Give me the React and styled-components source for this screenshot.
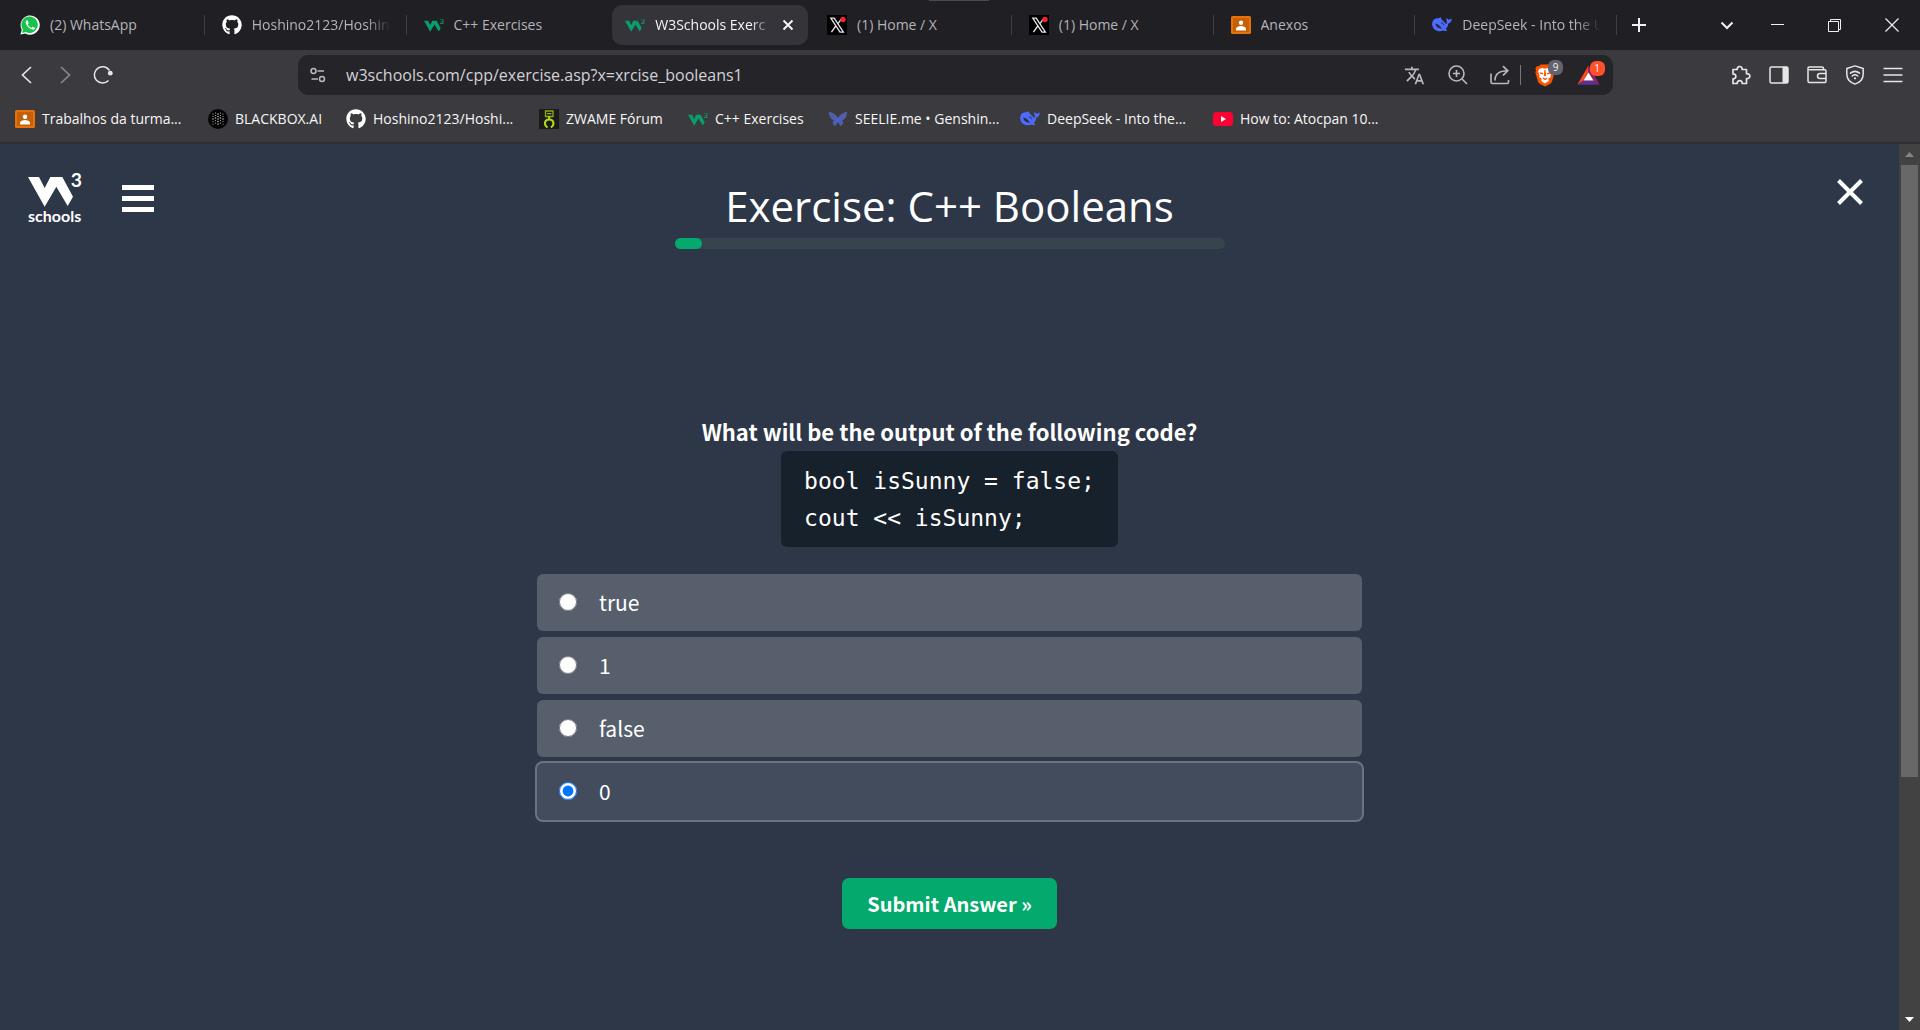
import React, { useState } from "react";
import styled, { createGlobalStyle } from "styled-components";
import { FaGithub } from "react-icons/fa6";
import { MdTranslate } from "react-icons/md";

const GlobalStyle = createGlobalStyle`
  *, *::before, *::after { box-sizing: border-box; }
  body {
    margin: 0;
    background: #2d3748;
    font-family: "Open Sans", "Noto Sans", sans-serif;
  }
  button, input { font: inherit; color: inherit; }
  button { padding: 0; border: 0; background: none; cursor: pointer; }
  a { color: inherit; text-decoration: none; }
  svg { display: block; flex: none; }
`;

const Window = styled.div`
  display: flex;
  flex-direction: column;
  min-height: 100vh;
`;

/* ---------- tab strip ---------- */

const TabStrip = styled.header`
  position: relative;
  display: flex;
  height: 50px;
  background: #201f24;
`;

const DragHandle = styled.span`
  position: absolute;
  top: 0;
  left: 50%;
  width: 60px;
  height: 1px;
  margin-left: -31px;
  background: #4b4b4d;
`;

const Tabs = styled.nav`
  flex: 1;
  min-width: 0;
  display: grid;
  grid-template-columns: repeat(8, minmax(0, 1fr));
  padding: 5px 0 5px 4px;
`;

const Tab = styled.a`
  display: flex;
  align-items: center;
  min-width: 0;
  gap: 10px;
  margin: 0 1px 0 3px;
  padding: 0 14px 0 13px;
  border-radius: 10px;
  color: ${(p) => (p.$active ? "#f4f4f6" : "#b4b4b8")};
  background: ${(p) => (p.$active ? "#35343a" : "transparent")};
`;

const TabCell = styled.div`
  display: grid;
  grid-template-columns: minmax(0, 1fr) 1px;
  align-items: stretch;
  padding-right: 1px;
`;

const Divider = styled.span`
  align-self: center;
  width: 1px;
  height: 20px;
  background: ${(p) => (p.$hidden ? "transparent" : p.$bright ? "#77767c" : "#403f45")};
`;

const TabTitle = styled.span`
  flex: 1;
  min-width: 0;
  overflow: hidden;
  white-space: nowrap;
  font-size: 14px;
  line-height: 20px;
  mask-image: ${(p) => (p.$fade ? "linear-gradient(to right, #000 82%, transparent 100%)" : "none")};
`;

const WindowControls = styled.div`
  flex: none;
  width: 302px;
  display: flex;
  align-items: center;
  color: #f0f0f2;
`;

const ControlButton = styled.button`
  display: grid;
  place-items: center;
  width: ${(p) => p.$width}px;
  height: 40px;
`;

const ControlSpacer = styled.span`
  flex: 1;
`;

/* ---------- toolbar ---------- */

const Toolbar = styled.div`
  display: flex;
  align-items: center;
  height: 50px;
  background: #3b3a3e;
  color: #e6e6e8;
`;

const NavButtons = styled.div`
  display: flex;
  flex: none;
  width: 298px;
  padding-left: 8px;
`;

const ToolButton = styled.button`
  display: grid;
  place-items: center;
  width: ${(p) => p.$width || 38}px;
  height: 38px;
  opacity: ${(p) => (p.disabled ? 0.45 : 1)};
`;

const AddressBar = styled.form`
  flex: 1;
  min-width: 0;
  display: flex;
  align-items: center;
  height: 40px;
  padding: 0 6px 0 4px;
  border-radius: 10px;
  background: #252429;
  color: #b9b9be;
`;

const AddressInput = styled.input`
  flex: 1;
  min-width: 0;
  height: 36px;
  margin-left: 12px;
  padding: 0;
  border: 0;
  outline: 0;
  background: transparent;
  color: #d2d2d8;
  font-size: 16px;
`;

const BadgedIcon = styled.span`
  position: relative;
  display: block;
`;

const Badge = styled.span`
  position: absolute;
  top: -4px;
  left: 13px;
  width: 15px;
  height: 15px;
  border-radius: 6px;
  background: ${(p) => p.$color};
  color: #f2f2f2;
  font-size: 10px;
  line-height: 15px;
  text-align: center;
`;

const ToolbarActions = styled.div`
  display: flex;
  flex: none;
  justify-content: flex-end;
  width: 307px;
  padding-right: 8px;
`;

/* ---------- bookmarks ---------- */

const BookmarkBar = styled.nav`
  display: flex;
  align-items: center;
  height: 44px;
  padding: 0 0 4px 15px;
  background: #3b3a3e;
  border-bottom: 2px solid #302f33;
`;

const Bookmark = styled.a`
  display: flex;
  align-items: center;
  flex: none;
  gap: 7px;
  width: ${(p) => p.$width}px;
  color: #f7f7f8;
  font-size: 14px;
  line-height: 20px;
  white-space: nowrap;
`;

/* ---------- page ---------- */

const Viewport = styled.div`
  flex: 1;
  display: flex;
  background: #2d3748;
`;

const Page = styled.main`
  flex: 1;
  min-width: 0;
  color: #ffffff;
`;

const PageHeader = styled.div`
  display: grid;
  grid-template-columns: minmax(0, 1fr) minmax(0, 550px) minmax(0, 1fr);
  align-items: start;
`;

const HeaderLeft = styled.div`
  display: flex;
  align-items: flex-start;
  gap: 40px;
  padding: 28px 0 0 28px;
`;

const Logo = styled.a`
  display: block;
  width: 54px;
`;

const LogoWord = styled.span`
  display: block;
  font-family: Lato, sans-serif;
  font-size: 16px;
  font-weight: 700;
  line-height: 18px;
`;

const MenuButton = styled.button`
  display: grid;
  gap: 6px;
  width: 32px;
  padding: 13px 0;
`;

const MenuBar = styled.span`
  height: 5px;
  background: #ffffff;
`;

const HeaderCenter = styled.div`
  padding-top: 32px;
  text-align: center;
`;

const Title = styled.h1`
  margin: 0 0 2px;
  font-size: 42px;
  font-weight: 400;
  line-height: 60px;
  white-space: nowrap;
`;

const Progress = styled.div`
  height: 11px;
  border-radius: 6px;
  background: #38444d;
`;

const ProgressFill = styled.div`
  width: 5%;
  height: 11px;
  border-radius: 6px;
  background: #04aa6d;
`;

const HeaderRight = styled.div`
  display: flex;
  justify-content: flex-end;
  padding: 35px 36px 0 0;
`;

const Exercise = styled.form`
  display: flex;
  flex-direction: column;
  align-items: center;
  width: 100%;
  max-width: 825px;
  margin: 0 auto;
  padding-top: 166px;
  font-family: "Noto Sans CJK SC", "Noto Sans", sans-serif;
`;

const Question = styled.h2`
  margin: 0 0 4px;
  font-size: 22px;
  font-weight: 700;
  line-height: 32px;
`;

const CodeBlock = styled.pre`
  margin: 0 0 27px;
  padding: 12px 23px 10px;
  border-radius: 6px;
  background: #17212b;
  font-family: "DejaVu Sans Mono", "Liberation Mono", monospace;
  font-size: 23px;
  line-height: 37px;
`;

const Options = styled.div`
  display: grid;
  gap: 6px;
  width: 100%;
`;

const Option = styled.label`
  display: flex;
  align-items: center;
  gap: 22px;
  height: 57px;
  padding: 0 22px 2px;
  border-radius: 6px;
  background: ${(p) => (p.$selected ? "#434c5d" : "#585f6c")};
  box-shadow: ${(p) => (p.$selected ? "0 0 0 2px #6c7380" : "none")};
  font-size: 21px;
  line-height: 30px;
`;

const Radio = styled.input`
  width: 18px;
  height: 18px;
  margin: 0;
  accent-color: #0075ff;
`;

const SubmitButton = styled.button`
  height: 51px;
  margin-top: 58px;
  padding: 0 25px;
  border-radius: 7px;
  background: #04aa6d;
  font-size: 20px;
  font-weight: 700;
  line-height: 30px;
`;

/* ---------- scrollbar ---------- */

const Scrollbar = styled.div`
  flex: none;
  display: flex;
  flex-direction: column;
  align-items: center;
  width: 21px;
  background: #424242;
`;

const ScrollTrack = styled.div`
  flex: 1;
  display: grid;
  grid-template-rows: 29fr 11fr;
  width: 17px;
`;

const ScrollThumb = styled.div`
  background: #686868;
`;

const ScrollArrow = styled.span`
  display: grid;
  place-items: center;
  height: 21px;
  color: ${(p) => (p.$dim ? "#868686" : "#ffffff")};
`;

/* ---------- drawings ---------- */

const W3Mark = ({ color = "#ffffff", width = 54, height = 35 }) => (
  <svg width={width} height={height} viewBox="24 18 162 105" fill={color} aria-hidden="true">
    <path d="M24 33H57L74 66L91 33H127L159 92L143 120L109 62L74 122Z" />
    <text x="152" y="62" fontFamily="Lato, sans-serif" fontWeight="700" fontSize="58">3</text>
  </svg>
);

const W3Favicon = () => <W3Mark color="#0a9c6b" width={20} height={13} />;

const WhatsAppIcon = () => (
  <svg width="20" height="20" viewBox="0 0 20 20">
    <path d="M.4 19.6 1.8 14.8A9.6 9.6 0 1 1 5.4 18.4Z" fill="#fff" />
    <path d="M2 18 3 14.6A8.2 8.2 0 1 1 5.8 17Z" fill="#17c24a" />
    <path d="M6.8 5.2c-.9.6-1.4 1.5-1 2.800.9 3 3.200 5.400 6.500 6.600 1.500.5 2.500-.2 2.900-1.500l-2.600-1.400-1.200 1.300C9.700 12.300 8.400 11 7.700 9.500l1-1.200L7.800 5.300Z" fill="#fff" />
  </svg>
);

const XIcon = () => (
  <svg width="20" height="20" viewBox="0 0 20 20">
    <rect width="20" height="20" fill="#000" />
    <path d="M3.800 3.200h3.400L16.400 17.200h-3.400ZM15 3.200 10.800 8.800M8.800 11 4.400 17.200" fill="none" stroke="#e8e8e8" strokeWidth="1.300" />
    <circle cx="16" cy="4.500" r="2.700" fill="#f4212e" />
  </svg>
);

const ClassroomIcon = () => (
  <svg width="20" height="18" viewBox="0 0 20 18">
    <rect width="20" height="18" rx="1.500" fill="#e8710a" />
    <rect x="2" y="2" width="16" height="14" fill="#c75f05" />
    <circle cx="10" cy="6.800" r="2.200" fill="#fff" />
    <path d="M5 14.500v-1.500c0-2 3-3 5-3s5 1 5 3v1.500Z" fill="#fff" />
  </svg>
);

const DeepSeekIcon = () => (
  <svg width="20" height="16" viewBox="0 0 20 16">
    <path d="M.3 6.500C.3 3 3 1.200 6 1.200c1.200 0 2-.6 3-.9-.2 1.500.8 2.600 2.200 3.600 1.200.9 2.200 1.800 2.800 3 .8-.5 1-1.300.7-2.500C14.300 3 14 2 14.600.8c.8 1.400 1.700 2 2.900 1.700.9-.2 1.600-.7 2.200-.9.200 2.600-1 4.500-3.300 5-.4 2.400-1.300 4.200-2.700 5.400l1.700 1.400c-1.400.9-3 .8-4.300.2-3.900 1.800-10.800.2-11.100-7.100Z" fill="#4d6bfe" />
    <path d="M3.200 6.800c2.200-.4 4.600 1.600 6.600 4.800-2.400.4-5.900-1.200-6.600-4.800Z" fill="#2b2b45" />
    <path d="M8.800 6c1.400-.4 2.800.6 2.800 2.300" fill="none" stroke="#2b2b45" strokeWidth="1" />
  </svg>
);

const BlackboxIcon = () => (
  <svg width="20" height="20" viewBox="0 0 20 20">
    <circle cx="10" cy="10" r="10" fill="#050505" />
    <g fill="#b5b5b5">
      {[5, 7.500, 10, 12.500, 15].map((x, i) =>
        [5, 7.500, 10, 12.500, 15].map((y) => (
          <circle key={`${x}-${y}`} cx={x} cy={i % 2 ? y - 1 : y} r={x === 10 || y === 10 ? 0.8 : 0.6} />
        ))
      )}
    </g>
  </svg>
);

const ZwameIcon = () => (
  <svg width="20" height="20" viewBox="0 0 20 20">
    <rect width="20" height="20" fill="#1b1b1b" />
    <path d="M6.500 2h7.500v5.500H6.500ZM8 4.700h4.500" fill="none" stroke="#8fae12" strokeWidth="1.300" />
    <path d="M10.200 7.500v3M8.500 18.500C7 17.500 5.500 16 6 13.500c.4-2.200 2-3 4.200-3s3.800.8 4.200 3c.5 2.500-1 4-2.500 5" fill="none" stroke="#b4dc14" strokeWidth="2" />
  </svg>
);

const ButterflyIcon = () => (
  <svg width="20" height="16" viewBox="0 0 20 16">
    <path d="M.800.8C5 1.500 8.500 4 10 7c1.500-3 5-5.500 9.200-6.200C19 5 17.500 8.500 14 9.200c2 1 1.500 4.300-.8 5.600C11.500 14.500 10.500 12 10 10.500 9.500 12 8.500 14.500 6.800 14.800 4.500 13.500 4 10.200 6 9.200 2.500 8.500 1 5 .8.800Z" fill="#525fa6" />
    <path d="M7 8.200 10 7l3 1.200-1.500 3h-3Z" fill="#4262e0" />
  </svg>
);

const YouTubeIcon = () => (
  <svg width="20" height="14" viewBox="0 0 20 14">
    <rect width="20" height="14" rx="3.500" fill="#ff0033" />
    <path d="M8 4v6l5-3Z" fill="#fff" />
  </svg>
);

const BraveIcon = () => (
  <svg width="20" height="23" viewBox="0 0 20 23">
    <path d="M5.500.5h9l1.500 1.800 2-.2 1.700 2.400-.7 2 .6 2.200-2.700 9.300-1.800 2-5.100 2.600-5.100-2.600-1.800-2L.4 8.700 1 6.500l-.7-2L2 2.100l2 .2Z" fill="#fb5200" />
    <path d="M4 5 7 4l3 .8L13 4l3 1 .8 2.500-1.300 4 .3 1.500-2.300 1.500.3 2.500L10 19.500 6.200 17l.3-2.500L4.200 13l.3-1.500-1.300-4Z" fill="#fff" />
    <path d="M4.500 8.300 8.200 9l-.5 1.500-2.500-.7ZM15.500 8.300 11.800 9l.5 1.500 2.500-.7ZM9.400 6h1.200l.5 5.500-1.100 1-1.100-1ZM7.300 13.300 10 14.400l2.700-1.100-.8 1.700-1.900 1.200L8.100 15Z" fill="#fb5200" />
  </svg>
);

const Stroke = ({ w = 20, h = 20, d, sw = 2, cap = "butt", children }) => (
  <svg width={w} height={h} viewBox={`0 0 ${w} ${h}`} fill="none" stroke="currentColor" strokeWidth={sw} strokeLinecap={cap} strokeLinejoin={cap === "round" ? "round" : "miter"} aria-hidden="true">
    {d && <path d={d} />}
    {children}
  </svg>
);

const ReloadIcon = () => (
  <Stroke sw={1.500} d="M15.500 15.500A8.200 8.200 0 1 1 16.500 5.500">
    <circle cx="17.300" cy="8.200" r="2.400" fill="currentColor" stroke="none" />
  </Stroke>
);

const SiteSettingsIcon = () => (
  <Stroke w={16} h={16} sw={1.500}>
    <circle cx="3.500" cy="4" r="2.500" />
    <path d="M7.500 4H14M1.500 12H8" />
    <circle cx="12" cy="12" r="2.500" />
  </Stroke>
);

const ZoomIcon = () => (
  <Stroke sw={1.600}>
    <circle cx="8.500" cy="8.500" r="7.500" />
    <path d="M5 8.500h7M8.500 5v7M14 14l5 5" />
  </Stroke>
);

const ShareIcon = () => (
  <Stroke sw={1.600} d="M1 8.500v8.500a1.500 1.500 0 0 0 1.500 1.500H17a1.500 1.500 0 0 0 1.500-1.500V15M5 15.500C5 9 9 5.800 17.500 5.800M13 1.200l4.800 4.600-4.800 4.600" />
);

const RewardsIcon = () => (
  <svg width="23" height="20" viewBox="0 0 23 20">
    <path d="M11.500.5V7.500L6.500 15.500.3 19.700Z" fill="#ff4724" />
    <path d="M11.500.5 22.700 19.700 16.500 15.500 11.500 7.500Z" fill="#9e1f63" />
    <path d="M.3 19.700 6.500 15.500h10l6.200 4.200Z" fill="#662d91" />
    <path d="M11.500 7.500 16.500 15.500h-10Z" fill="#fff" />
  </svg>
);

const PuzzleIcon = () => (
  <Stroke sw={1.700} cap="round" d="M2 4.500h4.200c-.4-3.500 5-4.500 5 0h4.300v4.200c4.500-.2 4.500 5.200 0 5V18.500h-4.300c.4-3.800-5-3.800-5 0H2v-4.600c3.800.2 3.800-5 0-5Z" />
);

const SidebarIcon = () => (
  <Stroke sw={1.500}>
    <rect x="1" y="2" width="18" height="16" rx="1.500" />
    <path d="M13.500 2H19V18H13.500Z" fill="currentColor" stroke="none" />
  </Stroke>
);

const WalletIcon = () => (
  <Stroke sw={1.500} cap="round" d="M16.500 5V3.500A1.500 1.500 0 0 0 15 2H3A1.500 1.500 0 0 0 1 3.500V16a1.500 1.500 0 0 0 1.500 1.500H18A1.500 1.500 0 0 0 19 16V6A1.500 1.500 0 0 0 18 4.800H2.500M19 8.500h-6a2.500 2.500 0 0 0 0 5h6" />
);

const VpnIcon = () => (
  <Stroke sw={1.500} cap="round" d="M10 .9 18.200 3.500V9c0 5-3.500 8.500-8.200 10.100C5.300 17.500 1.800 14 1.800 9V3.500ZM5.500 8.200c2.700-2.200 6.300-2.200 9 0M7.200 11c1.700-1.400 3.900-1.400 5.600 0">
    <circle cx="10" cy="13.300" r="1.100" fill="currentColor" stroke="none" />
  </Stroke>
);

const ICONS = {
  whatsapp: WhatsAppIcon,
  github: () => <FaGithub size={20} color="#ffffff" />,
  w3: W3Favicon,
  x: XIcon,
  classroom: ClassroomIcon,
  deepseek: DeepSeekIcon,
  blackbox: BlackboxIcon,
  zwame: ZwameIcon,
  butterfly: ButterflyIcon,
  youtube: YouTubeIcon,
};

const SiteIcon = ({ name }) => {
  const Icon = ICONS[name];
  return <Icon />;
};

/* ---------- data ---------- */

const TABS = [
  { icon: "whatsapp", title: "(2) WhatsApp" },
  { icon: "github", title: "Hoshino2123/Hoshin", fade: true },
  { icon: "w3", title: "C++ Exercises" },
  { icon: "w3", title: "W3Schools Exerc", active: true, fade: true },
  { icon: "x", title: "(1) Home / X" },
  { icon: "x", title: "(1) Home / X" },
  { icon: "classroom", title: "Anexos" },
  { icon: "deepseek", title: "DeepSeek - Into the U", fade: true },
];

const BOOKMARKS = [
  { icon: "classroom", title: "Trabalhos da turma...", width: 193 },
  { icon: "blackbox", title: "BLACKBOX.AI", width: 138 },
  { icon: "github", title: "Hoshino2123/Hoshi...", width: 193 },
  { icon: "zwame", title: "ZWAME Fórum", width: 149 },
  { icon: "w3", title: "C++ Exercises", width: 140 },
  { icon: "butterfly", title: "SEELIE.me • Genshin...", width: 192 },
  { icon: "deepseek", title: "DeepSeek - Into the...", width: 193 },
  { icon: "youtube", title: "How to: Atocpan 10...", width: 193 },
];

const ANSWERS = ["true", "1", "false", "0"];

const CODE = "bool isSunny = false;\ncout << isSunny;";

export default function App() {
  const [answer, setAnswer] = useState("0");

  return (
    <Window>
      <GlobalStyle />
      <TabStrip>
        <DragHandle />
        <Tabs>
          {TABS.map((tab, i) => (
            <TabCell key={i}>
              <Tab href="#" $active={tab.active}>
                <SiteIcon name={tab.icon} />
                <TabTitle $fade={tab.fade}>{tab.title}</TabTitle>
                {tab.active && (
                  <Stroke w={12} h={12} sw={2} d="M1.500 1.500l9 9M10.500 1.500l-9 9" />
                )}
              </Tab>
              <Divider $hidden={i === 2 || i === 3} />
            </TabCell>
          ))}
        </Tabs>
        <WindowControls>
          <ControlButton $width={42} aria-label="New tab">
            <Stroke w={14} h={14} sw={2} d="M7 0v14M0 7h14" />
          </ControlButton>
          <ControlSpacer />
          <ControlButton $width={44} aria-label="Search tabs">
            <Stroke w={14} h={14} sw={2} d="M1.500 4.500 7 10l5.500-5.500" />
          </ControlButton>
          <ControlButton $width={57} aria-label="Minimize">
            <Stroke w={13} h={13} sw={1} d="M0 5.500h13" />
          </ControlButton>
          <ControlButton $width={57} aria-label="Restore">
            <Stroke w={13} h={13} sw={1} d="M.5 2.500h10v10H.5ZM2.500 2.500v-2h10v10h-2" />
          </ControlButton>
          <ControlButton $width={57} aria-label="Close window">
            <Stroke w={14} h={14} sw={1.200} d="M.5.5l13 13M13.500.5l-13 13" />
          </ControlButton>
        </WindowControls>
      </TabStrip>

      <Toolbar>
        <NavButtons>
          <ToolButton aria-label="Back">
            <Stroke sw={1.700} d="M14 2 5.500 10l8.500 8" />
          </ToolButton>
          <ToolButton aria-label="Forward" disabled>
            <Stroke sw={1.700} d="M6 2l8.500 8L6 18" />
          </ToolButton>
          <ToolButton aria-label="Reload">
            <ReloadIcon />
          </ToolButton>
        </NavButtons>
        <AddressBar onSubmit={(e) => e.preventDefault()}>
          <ToolButton type="button" $width={32} aria-label="Site information">
            <SiteSettingsIcon />
          </ToolButton>
          <AddressInput
            type="text"
            aria-label="Address"
            defaultValue="w3schools.com/cpp/exercise.asp?x=xrcise_booleans1"
          />
          <ToolButton type="button" $width={43} aria-label="Translate">
            <MdTranslate size={21} />
          </ToolButton>
          <ToolButton type="button" $width={43} aria-label="Zoom">
            <ZoomIcon />
          </ToolButton>
          <ToolButton type="button" $width={41} aria-label="Share">
            <ShareIcon />
          </ToolButton>
          <Divider $bright />
          <ToolButton type="button" $width={48} aria-label="Shields">
            <BadgedIcon>
              <BraveIcon />
              <Badge $color="#62636f">9</Badge>
            </BadgedIcon>
          </ToolButton>
          <ToolButton type="button" $width={38} aria-label="Rewards">
            <BadgedIcon>
              <RewardsIcon />
              <Badge $color="#ff5029">1</Badge>
            </BadgedIcon>
          </ToolButton>
        </AddressBar>
        <ToolbarActions>
          <ToolButton aria-label="Extensions">
            <PuzzleIcon />
          </ToolButton>
          <ToolButton aria-label="Sidebar">
            <SidebarIcon />
          </ToolButton>
          <ToolButton aria-label="Wallet">
            <WalletIcon />
          </ToolButton>
          <ToolButton aria-label="VPN">
            <VpnIcon />
          </ToolButton>
          <ToolButton aria-label="Menu">
            <Stroke sw={1.500} d="M.500 3.500h19M.500 10h19M.500 16.500h19" />
          </ToolButton>
        </ToolbarActions>
      </Toolbar>

      <BookmarkBar>
        {BOOKMARKS.map((b) => (
          <Bookmark key={b.title} href="#" $width={b.width}>
            <SiteIcon name={b.icon} />
            {b.title}
          </Bookmark>
        ))}
      </BookmarkBar>

      <Viewport>
        <Page>
          <PageHeader>
            <HeaderLeft>
              <Logo href="#">
                <W3Mark />
                <LogoWord>schools</LogoWord>
              </Logo>
              <MenuButton aria-label="Open menu">
                <MenuBar />
                <MenuBar />
                <MenuBar />
              </MenuButton>
            </HeaderLeft>
            <HeaderCenter>
              <Title>Exercise: C++ Booleans</Title>
              <Progress>
                <ProgressFill />
              </Progress>
            </HeaderCenter>
            <HeaderRight>
              <button aria-label="Close exercise">
                <Stroke w={26} h={26} sw={4} d="M1.500 1.500l23 23M24.500 1.500l-23 23" />
              </button>
            </HeaderRight>
          </PageHeader>

          <Exercise onSubmit={(e) => e.preventDefault()}>
            <Question>What will be the output of the following code?</Question>
            <CodeBlock>{CODE}</CodeBlock>
            <Options>
              {ANSWERS.map((a) => (
                <Option key={a} $selected={answer === a}>
                  <Radio type="radio" name="answer" checked={answer === a} onChange={() => setAnswer(a)} />
                  {a}
                </Option>
              ))}
            </Options>
            <SubmitButton type="submit">Submit Answer »</SubmitButton>
          </Exercise>
        </Page>
        <Scrollbar>
          <ScrollArrow $dim>
            <svg width="9" height="5" viewBox="0 0 9 5" fill="currentColor"><path d="M0 5 4.500 0 9 5Z" /></svg>
          </ScrollArrow>
          <ScrollTrack>
            <ScrollThumb />
          </ScrollTrack>
          <ScrollArrow>
            <svg width="9" height="5" viewBox="0 0 9 5" fill="currentColor"><path d="M0 0 4.500 5 9 0Z" /></svg>
          </ScrollArrow>
        </Scrollbar>
      </Viewport>
    </Window>
  );
}
